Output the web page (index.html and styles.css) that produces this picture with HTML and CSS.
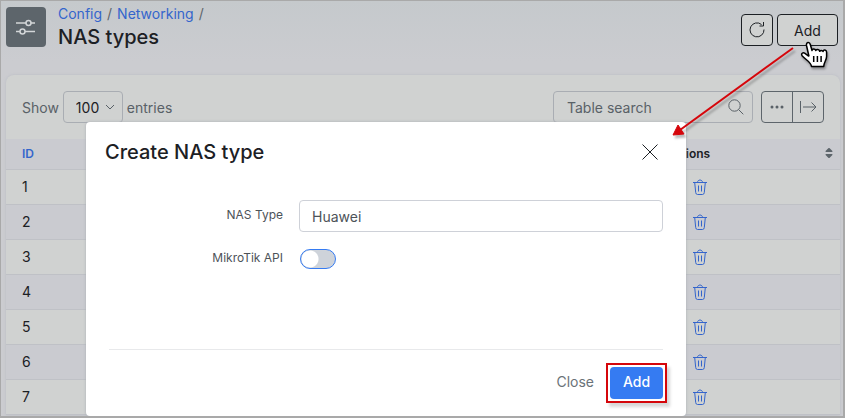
FILE: index.html
```html
<!DOCTYPE html>
<html lang="en">
<head>
<meta charset="utf-8">
<meta name="viewport" content="width=device-width, initial-scale=1">
<title>NAS types</title>
<link rel="stylesheet" href="styles.css">
</head>
<body>
<svg class="defs" aria-hidden="true">
  <symbol id="trash" viewBox="0 0 16 16">
    <path d="M1 3.5h14M5.5 3.5c0-3.300 5-3.300 5 0M2.700 3.500l1 10q.200 2 1.800 2h5q1.600 0 1.800-2l1-10M6.500 6.500v6M9.500 6.500v6"/>
  </symbol>
</svg>
<div class="page">
  <header class="top">
    <div class="module-icon">
      <svg width="20" height="18" viewBox="0 0 20 18"><path d="M0 5h10M15 5h4M0 13.500h4M9 13.500h10"/><circle cx="12.500" cy="5" r="2.500"/><circle cx="6.500" cy="13.500" r="2.500"/></svg>
    </div>
    <div class="heading">
      <nav class="crumbs"><a href="#">Config</a><span>/</span><a href="#">Networking</a><span>/</span></nav>
      <h1>NAS types</h1>
    </div>
    <div class="actions">
      <button class="btn btn-icon" aria-label="Refresh"><svg width="18" height="18" viewBox="0 0 18 18"><path d="M16 8.500a7 7 0 1 1-2.500-5M15.500 1v4h-4"/></svg></button>
      <button class="btn btn-add">Add</button>
    </div>
  </header>
  <main class="card">
    <div class="toolbar">
      <label class="length">Show
        <span class="select"><select><option>100</option></select><svg width="10" height="6" viewBox="0 0 10 6"><path d="M1 1l4 4 4-4"/></svg></span>
        entries</label>
      <div class="search"><input type="search" placeholder="Table search" aria-label="Table search"><svg width="16" height="16" viewBox="0 0 16 16"><circle cx="6.500" cy="6.500" r="5.700"/><path d="M10.700 10.700l4.600 4.600"/></svg></div>
      <div class="group">
        <button aria-label="More"><svg width="14" height="4" viewBox="0 0 14 4"><circle class="dot" cx="2" cy="2" r="1.500"/><circle class="dot" cx="7" cy="2" r="1.500"/><circle class="dot" cx="12" cy="2" r="1.500"/></svg></button>
        <button aria-label="Export"><svg width="18" height="12" viewBox="0 0 18 12"><path d="M1.500 0v12M4 6h13M12.500 1.500L17 6l-4.500 4.500"/></svg></button>
      </div>
    </div>
    <table>
      <thead><tr><th class="id">ID</th><th><div class="sortable">Actions<svg width="8" height="10" viewBox="0 0 8 10"><path class="dot" d="M1 4a.6.6 0 0 1-.4-1L3.300.300a1 1 0 0 1 1.400 0L7.400 3a.6.6 0 0 1-.4 1zM1 6a.6.6 0 0 0-.4 1l2.700 2.700a1 1 0 0 0 1.400 0L7.400 7A.6.6 0 0 0 7 6z"/></svg></div></th></tr></thead>
      <tbody>
        <tr><td>1</td><td><button class="del" aria-label="Delete 1"><svg><use href="#trash"/></svg></button></td></tr>
        <tr><td>2</td><td><button class="del" aria-label="Delete 2"><svg><use href="#trash"/></svg></button></td></tr>
        <tr><td>3</td><td><button class="del" aria-label="Delete 3"><svg><use href="#trash"/></svg></button></td></tr>
        <tr><td>4</td><td><button class="del" aria-label="Delete 4"><svg><use href="#trash"/></svg></button></td></tr>
        <tr><td>5</td><td><button class="del" aria-label="Delete 5"><svg><use href="#trash"/></svg></button></td></tr>
        <tr><td>6</td><td><button class="del" aria-label="Delete 6"><svg><use href="#trash"/></svg></button></td></tr>
        <tr><td>7</td><td><button class="del" aria-label="Delete 7"><svg><use href="#trash"/></svg></button></td></tr>
      </tbody>
    </table>
  </main>

  <form class="modal" role="dialog" aria-labelledby="modal-title">
    <div class="modal-head">
      <h2 id="modal-title">Create NAS type</h2>
      <button type="button" class="close" aria-label="Close dialog"><svg width="16" height="16" viewBox="0 0 16 16"><path d="M.5.5l15 15M15.500.5l-15 15"/></svg></button>
    </div>
    <div class="fields">
      <label for="nas">NAS Type</label>
      <input id="nas" type="text" value="Huawei">
      <label for="api">MikroTik API</label>
      <input id="api" class="switch" type="checkbox">
    </div>
    <div class="modal-foot">
      <button type="button" class="link">Close</button>
      <span class="marked"><button type="button" class="primary">Add</button></span>
    </div>
  </form>

  <svg class="arrow" width="130" height="96" viewBox="0 0 130 96" aria-hidden="true">
    <path class="line" d="M121 4L8 86"/><path class="tip" d="M1 91L6 81L12 90z"/>
  </svg>
  <svg class="cursor" width="28" height="28" viewBox="0 0 28 28" aria-hidden="true">
    <path d="M9 15.500L6.500 4.500C5.900 1 9.500.500 10.300 3.500L12 9.500C12.200 7.300 15.200 7.500 15.800 9.500C16.500 8 19.300 8.300 19.700 10.300C20.500 9 22.500 9.300 23 10.500C23.600 8 26.500 8.700 26.600 11V15.500C26.600 19 24 21 23.700 25.500H11.500C11 21 6 19 2.300 15C.5 12.500 3 11 5 12.300L9 15.500"/>
    <path class="rib" d="M13.700 15v6M17.400 15v6M21.100 15v6"/>
  </svg>
</div>
</body>
</html>
```
FILE: styles.css
```css
* { box-sizing: border-box; }

body {
  margin: 0;
  font-family: Inter, sans-serif;
  font-size: 14px;
  color: #1c2024;
}

button, input, select { font: inherit; color: inherit; margin: 0; }
svg { fill: none; stroke: currentColor; display: block; }
.dot { fill: currentColor; stroke: none; }
.defs { position: absolute; width: 0; height: 0; }

.page {
  position: relative;
  min-height: 100vh;
  overflow: hidden;
  border: 1px solid #a9a9a9;
  border-width: 1px 2px 2px 1px;
  background: linear-gradient(#c5c9cc, #cbccd0 60px);
}

.top {
  display: flex;
  align-items: flex-start;
  padding: 4px 5px 0;
  height: 74px;
}

.module-icon {
  width: 40px;
  height: 40px;
  margin-top: 2px;
  border-radius: 4px;
  background: #5d656b;
  color: #d3d6d8;
  display: grid;
  place-items: center;
}
.module-icon svg { stroke-width: 1.5; }

.heading { flex: 1; margin-left: 12px; }
.crumbs { display: flex; gap: 5px; line-height: 17px; color: #5d656b; }
.crumbs a { color: #3465cc; text-decoration: none; }
h1, h2 { margin: 0; font-size: 20px; font-weight: 500; }
h1 { line-height: 30px; }

.actions { display: flex; gap: 4px; margin-top: 9px; }
.btn {
  height: 32px;
  padding: 0;
  border: 1px solid #1c2024;
  border-radius: 4px;
  background: #d0d2d1;
  display: grid;
  place-items: center;
}
.btn-icon { width: 32px; }
.btn-add { width: 61px; }

.card {
  margin: 0 3px 0 5px;
  border-radius: 8px 8px 0 0;
  background: #d0d2d1;
  box-shadow: 0 0 3px #b9bcc4;
}

.toolbar {
  display: flex;
  align-items: center;
  height: 64px;
  padding: 0 16px;
  color: #596167;
}
.length { display: flex; align-items: center; gap: 4px; flex: 1; }
.select { position: relative; color: #1c2024; }
.select select {
  appearance: none;
  width: 60px;
  height: 32px;
  padding: 0 12px;
  border: 1px solid #a9adb3;
  border-radius: 4px;
  background: transparent;
}
.select svg { position: absolute; right: 8px; top: 13px; color: #596167; pointer-events: none; }

.search {
  display: flex;
  align-items: center;
  width: 200px;
  height: 32px;
  padding: 0 8px 0 13px;
  border: 1px solid #a9adb3;
  border-radius: 4px;
}
.search input { flex: 1; min-width: 0; padding: 0; border: 0; background: none; outline: 0; }
.search input::placeholder { color: #596167; opacity: 1; }
.group { display: flex; margin-left: 8px; border: 1px solid #5d656b; border-radius: 4px; }
.group button {
  width: 30px;
  height: 30px;
  padding: 0;
  border: 0;
  background: none;
  display: grid;
  place-items: center;
}
.group button + button { width: 31px; border-left: 1px solid #5d656b; }

table { width: 100%; border-collapse: separate; border-spacing: 0; table-layout: fixed; }
th, td { padding: 0 16px 2px; text-align: left; border-bottom: 1px solid #bfc1c6; }
th { height: 31px; font-size: 12px; font-weight: 600; background: #cacbd0; }
th.id { width: 644px; color: #3465cc; }
td { height: 35px; }
tr:nth-child(even) td { background: #cacbd0; }
th:last-child { padding: 0 7px 2px 16px; }
.sortable { display: flex; align-items: center; justify-content: space-between; }
.sortable svg { color: #5d656b; }
td:last-child { padding: 0 0 0 42px; }
.del { display: block; padding: 0; border: 0; background: none; color: #3465cc; }
.del svg { width: 16px; height: 16px; }

.modal {
  position: absolute;
  top: 121px;
  left: 85px;
  right: 157px;
  padding: 0 23px;
  height: 294px;
  border-radius: 4px;
  background: #fff;
  box-shadow: 0 0 3px #a9adb3;
  display: flex;
  flex-direction: column;
}
.modal-head { display: flex; align-items: center; justify-content: space-between; height: 60px; margin: 0 1px 0 -4px; }
.close { padding: 4px; border: 0; background: none; color: #1c2024; }
.fields {
  flex: 1;
  display: grid;
  grid-template-columns: 174px 1fr;
  column-gap: 16px;
  row-gap: 17px;
  align-content: start;
  align-items: center;
  padding-top: 18px;
}
.fields label { padding-bottom: 2px; font-size: 12px; line-height: 16px; text-align: right; color: #4d5359; }
#nas {
  width: 100%;
  height: 32px;
  padding: 0 12px;
  border: 1px solid #ced1d8;
  border-radius: 4px;
  color: #4d5359;
}
.switch {
  appearance: none;
  width: 36px;
  height: 20px;
  margin-left: 1px;
  border: 1px solid #357bf2;
  border-radius: 10px;
  background: radial-gradient(circle at 9px 9px, #fff 8px, #ced3da 9px);
}
.modal-foot {
  display: flex;
  align-items: center;
  justify-content: flex-end;
  gap: 12px;
  height: 67px;
  margin-right: -4px;
  background: linear-gradient(#e8e9eb, #e8e9eb) 0 0 / calc(100% - 4px) 1px no-repeat;
}
.link { padding: 0 0 2px; border: 0; background: none; color: #6a7278; }
.marked { padding: 2px; border: 2px solid #d5060b; box-shadow: 3px 4px 3px #d8d8d8; }
.primary {
  display: block;
  width: 53px;
  height: 32px;
  padding: 0 0 2px;
  border: 0;
  border-radius: 4px;
  background: #357bf2;
  color: #fff;
  font-weight: 500;
}

.arrow { position: absolute; top: 43px; right: 41px; filter: drop-shadow(2px 3px 1px #0004); }
.arrow .line { stroke: #d5060b; stroke-width: 2; }
.arrow .tip { fill: #d5060b; stroke: #d5060b; stroke-width: 1; }
.cursor { position: absolute; top: 40px; right: 15px; filter: drop-shadow(1px 2px 1px #0005); }
.cursor path { fill: #fff; stroke: #000; stroke-width: 1.5; stroke-linejoin: round; }
.cursor .rib { fill: none; }
```
